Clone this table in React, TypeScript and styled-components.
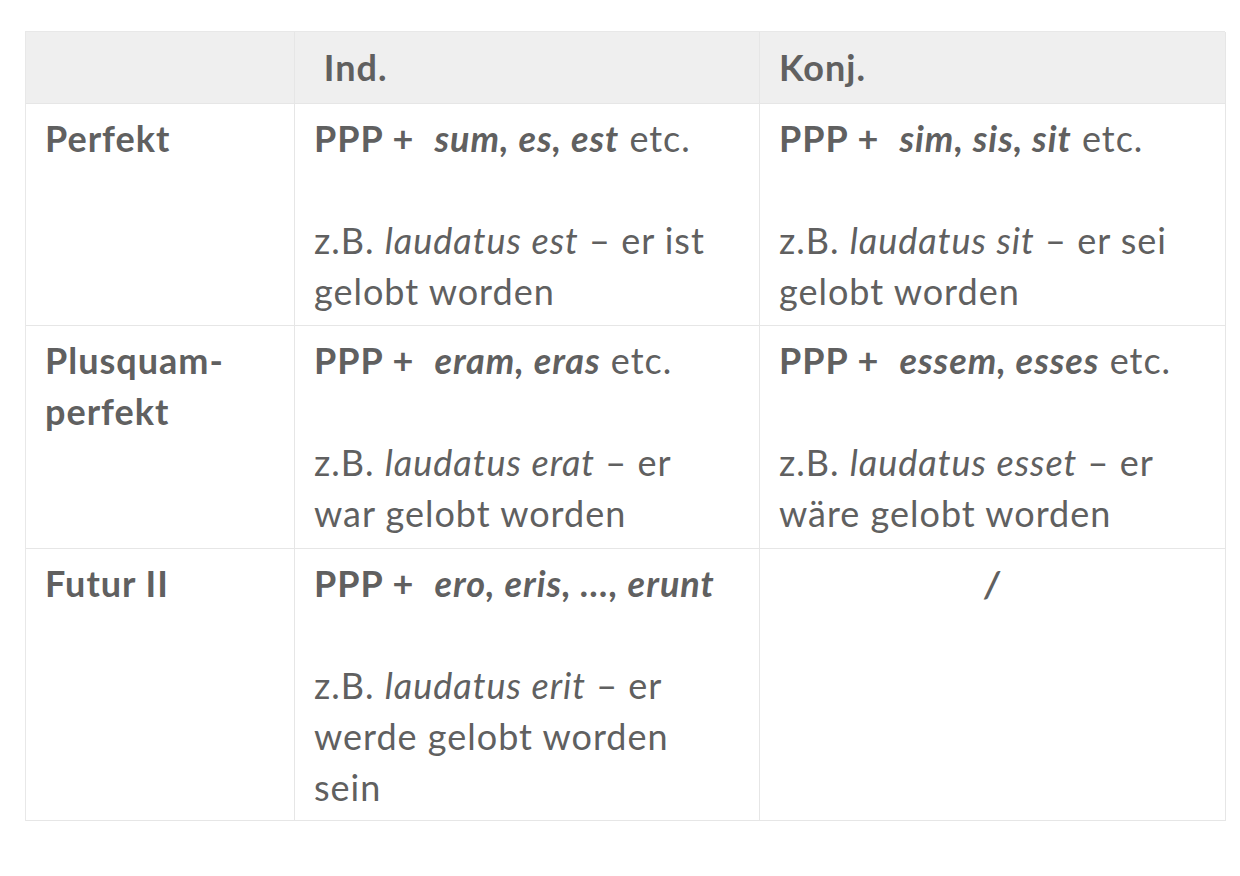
import React from 'react';
import styled, {createGlobalStyle} from 'styled-components';

const GlobalStyle = createGlobalStyle`
    html, body {
        margin: 0;
        padding: 0;
        background: #fff;
    }
    body {
        font-family: Lato, "Open Sans", sans-serif;
        color: #606060;
    }
`;

const Page = styled.div`
    width: 1240px;
    height: 876px;
    padding: 31px 0 0 25px;
    box-sizing: border-box;
`;

const Table = styled.div`
    display: grid;
    grid-template-columns: 269px 465px 466px;
    grid-template-rows: 72px 222px 223px 272px;
    width: 1200px;
    border-top: 1px solid #e8e8e8;
    border-left: 1px solid #e8e8e8;
    box-sizing: border-box;
`;

const Cell = styled.div<{ head?: boolean; center?: boolean }>`
    background: ${({head}) => (head ? '#efefef' : '#fff')};
    border-right: 1px solid #e6e6e6;
    border-bottom: 1px solid #e6e6e6;
    padding: ${({head}) => (head ? '0 19px' : '9px 19px 0')};
    display: ${({head}) => (head ? 'flex' : 'block')};
    align-items: center;
    text-align: ${({center}) => (center ? 'center' : 'left')};
    font-size: 36px;
    line-height: 51px;
    letter-spacing: 1px;
    font-weight: ${({head}) => (head ? 700 : 400)};
    white-space: nowrap;
`;

const Label = styled.span`
    font-weight: 700;
`;

const Form = styled.span`
    font-weight: 700;
    font-style: italic;
`;

const Example = styled.span`
    font-style: italic;
`;

// one tense row: label, indicative, subjunctive
const rows = [
    {
        label: <>Perfekt</>,
        ind: {form: 'sum, es, est', etc: true, ex: 'laudatus est', tail: ['– er ist', 'gelobt worden']},
        konj: {form: 'sim, sis, sit', etc: true, ex: 'laudatus sit', tail: ['– er sei', 'gelobt worden']},
    },
    {
        label: <>Plusquam-<br />perfekt</>,
        ind: {form: 'eram, eras', etc: true, ex: 'laudatus erat', tail: ['– er', 'war gelobt worden']},
        konj: {form: 'essem, esses', etc: true, ex: 'laudatus esset', tail: ['– er', 'wäre gelobt worden']},
    },
    {
        label: <>Futur II</>,
        ind: {form: 'ero, eris, …, erunt', etc: false, ex: 'laudatus erit', tail: ['– er', 'werde gelobt worden', 'sein']},
        konj: null,
    },
];

type Entry = { form: string; etc: boolean; ex: string; tail: string[] };

const Content = ({entry}: { entry: Entry }) => (
    <>
        <Label>PPP + </Label>&nbsp;<Form>{entry.form}</Form>{entry.etc ? ' etc.' : ''}
        <br />
        <br />
        z.B. <Example>{entry.ex}</Example> {entry.tail[0]}
        {entry.tail.slice(1).map((t, i) => (
            <React.Fragment key={i}>
                <br />
                {t}
            </React.Fragment>
        ))}
    </>
);

export default function App() {
    return (
        <>
            <GlobalStyle />
            <Page>
                <Table>
                    <Cell head />
                    <Cell head>&nbsp;Ind.</Cell>
                    <Cell head>Konj.</Cell>
                    {rows.map((row, index) => (
                        <React.Fragment key={index}>
                            <Cell>
                                <Label>{row.label}</Label>
                            </Cell>
                            <Cell>
                                <Content entry={row.ind} />
                            </Cell>
                            {row.konj ? (
                                <Cell>
                                    <Content entry={row.konj} />
                                </Cell>
                            ) : (
                                <Cell center>
                                    <Form>/</Form>
                                </Cell>
                            )}
                        </React.Fragment>
                    ))}
                </Table>
            </Page>
        </>
    );
}
